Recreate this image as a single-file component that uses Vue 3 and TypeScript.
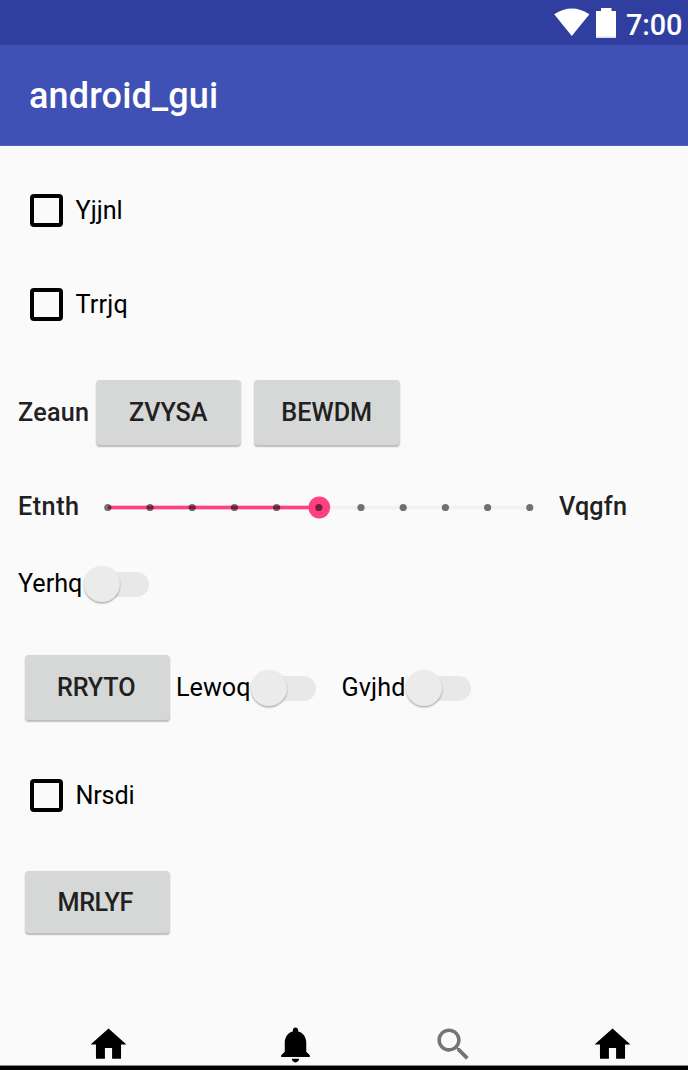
<script setup lang="ts">
const ticks: number[] = Array.from({ length: 11 }, (_, i) => i)
const homePath = 'M10 20v-6h4v6h5v-8h3L12 3 2 12h3v8z'
</script>

<template>
  <div class="screen">
    <header class="status">
      <svg class="wifi" viewBox="0 0 36 29" width="36" height="29"><path d="M0.2 6.2Q17.8 -5.2 35.4 6.2L17.8 28z" fill="#fff" /></svg>
      <svg class="battery" viewBox="0 0 20 30" width="20" height="30"><path d="M0 3h5V0h10.500v3H20v27H0z" fill="#fff" /><path d="M0 28.500h20V30H0z" fill="#d9dcef" /></svg>
      <span class="time">7:00</span>
    </header>
    <div class="appbar"><h1>android_gui</h1></div>
    <main>
      <label class="row check r1"><span class="box"></span><span class="txt">Yjjnl</span></label>
      <label class="row check r2"><span class="box"></span><span class="txt wide">Trrjq</span></label>
      <div class="row r3">
        <span class="label zeaun">Zeaun</span>
        <button class="btn">ZVYSA</button>
        <button class="btn second">BEWDM</button>
      </div>
      <div class="row r4">
        <span class="label etnth">Etnth</span>
        <svg class="slider" width="448" height="30" viewBox="0 0 448 30">
          <rect x="12" y="13.700" width="423" height="3.600" fill="#f1f1f1" />
          <rect x="12" y="13.700" width="212" height="3.600" fill="#ff4081" />
          <circle cx="223.300" cy="15.500" r="10.900" fill="#ff4081" />
          <circle v-for="t in ticks" :key="t" :cx="11.800 + t * 42.200" cy="15.500" r="3.600" fill="#000" fill-opacity=".54" />
        </svg>
        <span class="label vqgfn">Vqgfn</span>
      </div>
      <div class="row r5">
        <span class="txt yerhq">Yerhq</span><span class="switch"><i></i></span>
      </div>
      <div class="row r6">
        <button class="btn tight">RRYTO</button>
        <span class="txt lewoq">Lewoq</span><span class="switch"><i></i></span>
        <span class="txt gvjhd">Gvjhd</span><span class="switch"><i></i></span>
      </div>
      <label class="row check r7"><span class="box"></span><span class="txt narrow">Nrsdi</span></label>
      <div class="row r8"><button class="btn short">MRLYF</button></div>
    </main>
    <nav>
      <svg class="n1" viewBox="0 0 24 24"><path :d="homePath" /></svg>
      <svg class="n2" viewBox="0 0 24 24"><path d="M12 22c1.100 0 2-.9 2-2h-4c0 1.100.89 2 2 2zm6-6v-5c0-3.070-1.640-5.640-4.500-6.320V4c0-.83-.67-1.500-1.500-1.500s-1.500.67-1.500 1.500v.68C7.630 5.360 6 7.920 6 11v5l-2 2v1h16v-1l-2-2z" /></svg>
      <svg class="n3" viewBox="0 0 24 24"><path fill="#757575" d="M15.500 14h-.79l-.28-.27C15.410 12.590 16 11.110 16 9.500 16 5.910 13.090 3 9.500 3S3 5.910 3 9.500 5.910 16 9.500 16c1.610 0 3.090-.59 4.230-1.570l.27.28v.79l5 4.990L20.490 19l-4.990-5zm-6 0C7.010 14 5 11.990 5 9.500S7.010 5 9.500 5 14 7.010 14 9.500 11.990 14 9.500 14z" /></svg>
      <svg class="n4" viewBox="0 0 24 24"><path :d="homePath" /></svg>
    </nav>
    <div class="edge"></div>
  </div>
</template>

<style>
body { margin: 0; background: #fafafa; }
</style>

<style scoped>
.screen { width: 688px; height: 1070px; overflow: hidden; display: flex; flex-direction: column; background: #fafafa; font-family: Roboto, sans-serif; color: #000; }
.status { height: 45px; flex: none; display: flex; align-items: flex-start; background: #303f9f; color: #fff; box-sizing: border-box; padding: 8px 0 0 554px; }
.wifi { flex: none; }
.battery { flex: none; margin-left: 6px; }
.time { margin-left: 10px; font-size: 28.800px; font-weight: 500; line-height: 34px; letter-spacing: -0.1px; white-space: nowrap; }
.appbar { height: 101px; flex: none; box-sizing: border-box; background: #3f51b5; border-bottom: 1px solid #5565be; padding: 2px 0 0 29px; display: flex; align-items: center; }
h1 { margin: 0; font-size: 36px; font-weight: 500; line-height: 42px; letter-spacing: 0.150px; color: #fff; }
main { flex: 1; padding-top: 17px; }
.row { display: flex; align-items: center; }
.r1, .r2 { height: 94px; }
.r3, .r6, .r8 { height: 122px; }
.r4 { height: 68px; }
.r5 { height: 86px; }
.r7 { height: 92px; }
.check { padding-left: 30px; }
.box { box-sizing: border-box; width: 33px; height: 33px; border: 4px solid #000; border-radius: 4px; margin-right: 12.500px; }
.txt { font-size: 25.200px; line-height: 30px; }
.check .txt { padding-top: 2px; }
.wide { letter-spacing: 0.200px; }
.narrow { letter-spacing: -0.2px; }
.label { font-size: 25.200px; line-height: 30px; font-weight: 500; color: #212121; letter-spacing: 0.250px; }
.r3, .r4, .r5 { padding-left: 18px; }
.r6, .r8 { padding-left: 24.500px; }
.zeaun { width: 77.500px; padding-top: 2px; }
.etnth { width: 78px; letter-spacing: 0.500px; }
.vqgfn { letter-spacing: 0.200px; }
.slider { flex: none; margin-right: 15px; }
.btn { width: 145.500px; height: 65px; padding: 2px 0 0; border: 0; border-radius: 4px; background: #d6d8d7; box-shadow: 0 1.500px 1.500px rgba(0,0,0,.25); font: 500 25.200px/30px Roboto, sans-serif; color: #212121; }
.r6 .btn { padding: 0 2px 0 0; position: relative; margin-top: -1px; }
.second { margin-left: 13px; }
.tight { letter-spacing: -0.1px; }
.short { height: 62px; padding: 1px 4px 0 0; letter-spacing: -0.450px; }
.yerhq { width: 65.500px; }
.lewoq { width: 74.500px; margin-left: 6px; }
.gvjhd { width: 64px; margin-left: 26px; letter-spacing: 0.100px; }
.switch { flex: none; position: relative; width: 65px; height: 25px; display: flex; align-items: center; }
.switch::before { content: ""; position: absolute; right: 0; top: 0; width: 52px; height: 25px; border-radius: 13px; background: #e8e8e8; }
.switch i { position: relative; width: 36px; height: 36px; border-radius: 50%; background: #ebebeb; box-shadow: 0 1.500px 2px rgba(0,0,0,.3); }
nav { height: 43px; flex: none; display: grid; grid-template-columns: 187px 158.500px 158.500px 1fr; padding-left: 86.500px; }
nav svg { width: 43px; height: 43px; margin-top: 0.700px; }
.edge { height: 5px; flex: none; box-sizing: border-box; background: #000; border-top: 1px solid #888; }
</style>
